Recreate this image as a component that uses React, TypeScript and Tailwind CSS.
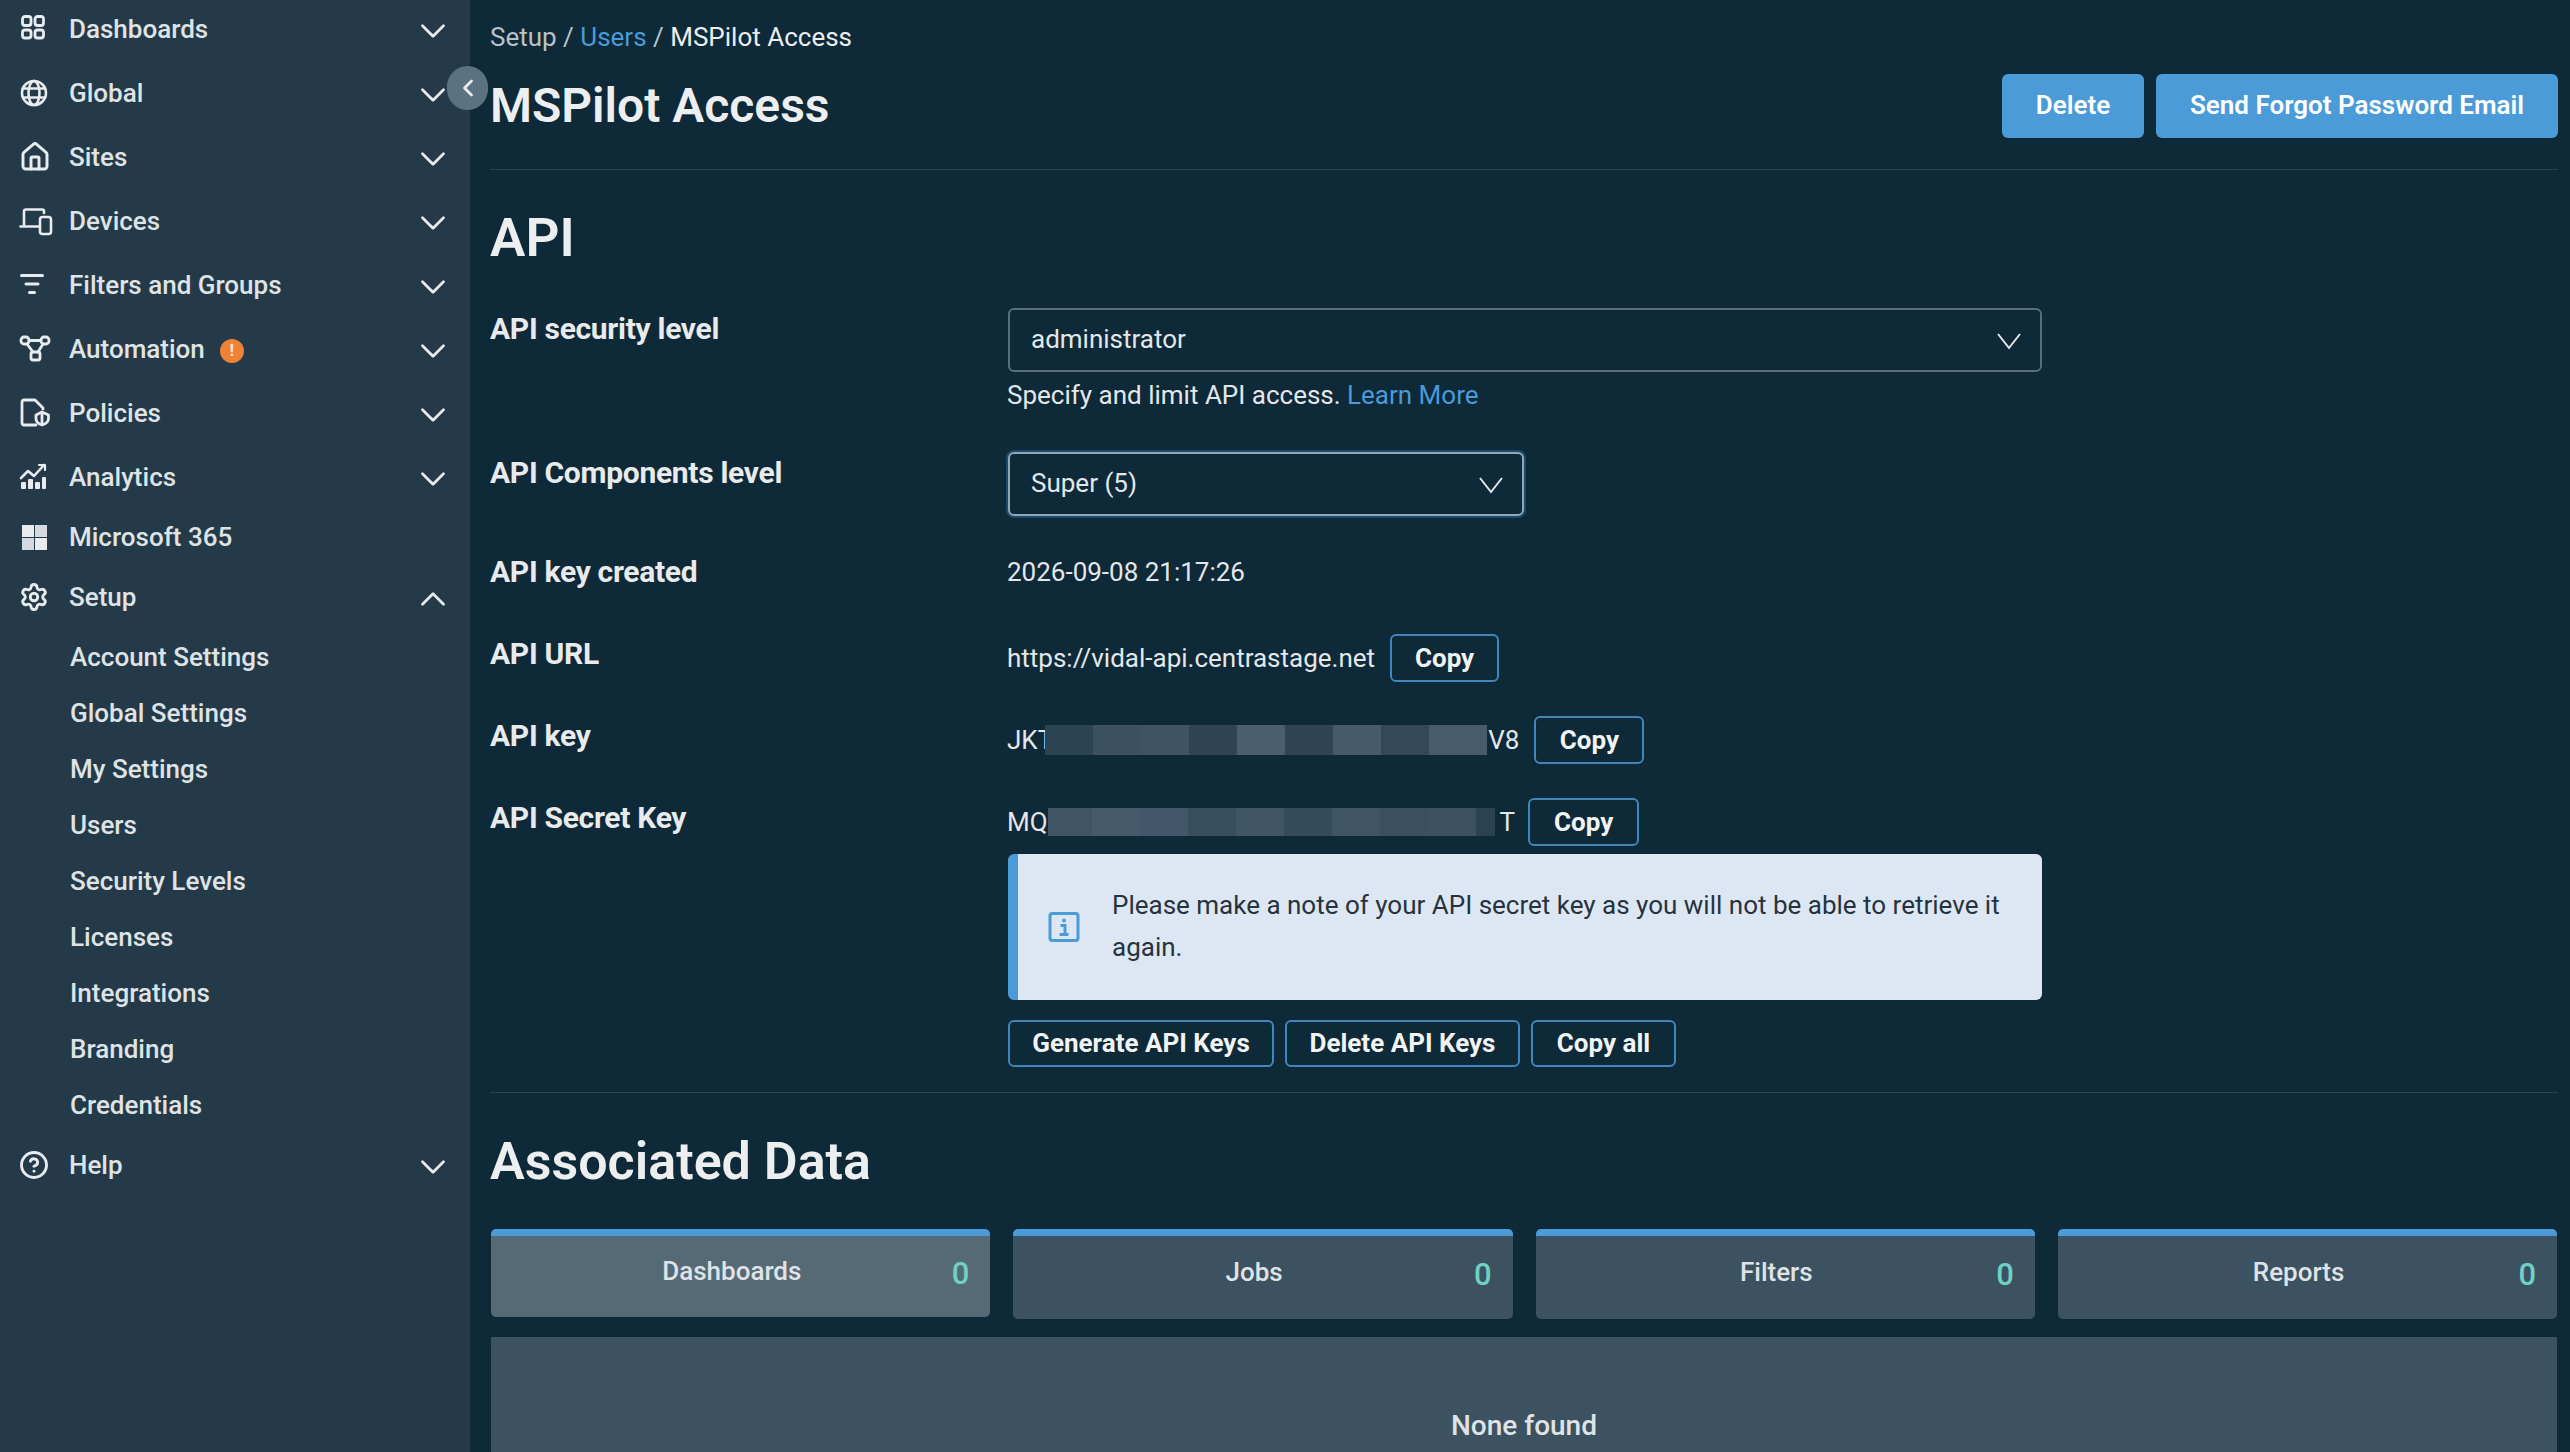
import React from "react";
import { ChevronDown, ChevronLeft, ChevronUp, CircleHelp, House, Settings } from "lucide-react";

const ic = { fill: "none", stroke: "currentColor", strokeWidth: 2, strokeLinecap: "round" as const, strokeLinejoin: "round" as const };

const DashIcon = () => (
  <svg width="30" height="30" viewBox="0 0 30 30" {...ic} strokeWidth={2.8}>
    <rect x="3.500" y="2.500" width="8.500" height="9" rx="2.500" />
    <rect x="16" y="2.500" width="8.500" height="9" rx="2.500" />
    <rect x="3.500" y="16" width="8.500" height="8" rx="2.500" />
    <rect x="16" y="16" width="8.500" height="8" rx="2.500" />
  </svg>
);
const GlobeIcon = () => (
  <svg width="30" height="30" viewBox="0 0 30 30" {...ic} strokeWidth={2.6}>
    <circle cx="15" cy="15" r="12" />
    <ellipse cx="15" cy="15" rx="5.500" ry="12" />
    <path d="M4 10.500h22M4 19.500h22" />
  </svg>
);
const DevicesIcon = () => (
  <svg width="36" height="30" viewBox="0 0 36 30" {...ic} strokeWidth={2.6}>
    <path d="M5 19V5.500A2 2 0 0 1 7 3.500h16a2 2 0 0 1 2 2V7" />
    <path d="M1.500 20.500H20" />
    <rect x="21" y="11" width="11" height="17" rx="2.500" />
  </svg>
);
const FilterIcon = () => (
  <svg width="30" height="30" viewBox="0 0 30 30" {...ic} strokeWidth={3}>
    <path d="M2.500 5.500h21" />
    <path d="M7 14h12" />
    <path d="M10.500 22.500h5" />
  </svg>
);
const AutomationIcon = () => (
  <svg width="32" height="30" viewBox="0 0 32 30" {...ic} strokeWidth={2.8}>
    <rect x="2" y="3" width="8" height="7" rx="3" />
    <rect x="22" y="3" width="8" height="7" rx="3" />
    <rect x="12" y="18" width="9" height="8" rx="2" />
    <path d="M10 6.500h12" />
    <path d="M8 10l6 8" />
    <path d="M24 10l-5 8" />
  </svg>
);
const PolicyIcon = () => (
  <svg width="32" height="30" viewBox="0 0 32 30" {...ic} strokeWidth={2.8}>
    <path d="M17 27H5a2 2 0 0 1-2-2V4a2 2 0 0 1 2-2h11l8 8v1" />
    <path d="M23 14l6.500 3v3.500c0 3.500-3 5.500-6.500 6.500-3.500-1-6-3-6-6.500V17z" />
    <path d="M23 15v11" />
  </svg>
);
const AnalyticsIcon = () => (
  <svg width="30" height="30" viewBox="0 0 30 30" fill="currentColor">
    <rect x="2" y="20" width="5" height="7" rx="1" />
    <rect x="9" y="17" width="5" height="10" rx="1" />
    <rect x="16" y="20" width="5" height="7" rx="1" />
    <rect x="23" y="15" width="4" height="12" rx="1" />
    <path d="M2 16l7-7 6 5 10-11" {...ic} strokeWidth={2.6} />
    <path d="M20 3h6v5" {...ic} strokeWidth={2.2} />
  </svg>
);
const MsIcon = () => (
  <svg width="30" height="30" viewBox="0 0 30 30" fill="currentColor">
    <rect x="3" y="3" width="12" height="12" />
    <rect x="16" y="3" width="12" height="12" opacity="0.9" />
    <rect x="3" y="16" width="12" height="12" opacity="0.9" />
    <rect x="16" y="16" width="12" height="12" />
  </svg>
);
const AlertIcon = () => (
  <svg width="32" height="32" viewBox="0 0 32 32" fill="none" stroke="#4a9bd8">
    <rect x="2" y="2.500" width="28" height="27" rx="2.500" strokeWidth="3" />
    <circle cx="16" cy="9.500" r="2" fill="#4a9bd8" stroke="none" />
    <path d="M12.500 14.500H17V23M11.500 23.500h9" strokeWidth="3" />
  </svg>
);
const SelectArrow = () => (
  <svg className="ml-auto mt-[3px]" width="26" height="18" viewBox="0 0 26 18" fill="none" stroke="#e4e7ea" strokeWidth="2">
    <path d="M2 2l11 14L24 2" />
  </svg>
);

type Item = { label: string; icon: React.ReactNode; h: string; up?: boolean; none?: boolean; badge?: boolean };
const top: Item[] = [
  { label: "Dashboards", icon: <DashIcon />, h: "h-[64px]" },
  { label: "Global", icon: <GlobeIcon />, h: "h-[64px]" },
  { label: "Sites", icon: <House size={32} strokeWidth={2.2} />, h: "h-[64px]" },
  { label: "Devices", icon: <DevicesIcon />, h: "h-[64px]" },
  { label: "Filters and Groups", icon: <FilterIcon />, h: "h-[64px]" },
  { label: "Automation", icon: <AutomationIcon />, h: "h-[64px]", badge: true },
  { label: "Policies", icon: <PolicyIcon />, h: "h-[64px]" },
  { label: "Analytics", icon: <AnalyticsIcon />, h: "h-[64px]" },
  { label: "Microsoft 365", icon: <MsIcon />, h: "h-[56px]", none: true },
  { label: "Setup", icon: <Settings size={30} strokeWidth={2.3} />, h: "h-[64px]", up: true },
];
const subs = ["Account Settings", "Global Settings", "My Settings", "Users", "Security Levels", "Licenses", "Integrations", "Branding", "Credentials"];

function NavRow({ item }: { item: Item }) {
  return (
    <div className={`flex items-center pl-[19px] pr-[16px] ${item.h}`}>
      <span className="flex w-[50px] shrink-0 items-center text-[#e8ecef]">{item.icon}</span>
      <span className="text-[26px] font-medium leading-none text-[#dfe3e6]">{item.label}</span>
      {item.badge && (
        <span className="ml-[15px] mt-[3px] flex h-[24px] w-[24px] items-center justify-center rounded-full bg-[#ee8237] text-[17px] font-bold leading-none text-[#fde6d4]">!</span>
      )}
      {!item.none && (
        <span className="ml-auto mt-[4px] text-[#e6eaed]">
          {item.up ? <ChevronUp size={42} strokeWidth={1.6} /> : <ChevronDown size={42} strokeWidth={1.6} />}
        </span>
      )}
    </div>
  );
}

function Sidebar() {
  return (
    <aside className="relative h-full w-[470px] shrink-0 bg-[#243a49]">
      <div className="-mt-[3px] flex flex-col">
        {top.map((t) => (
          <NavRow key={t.label} item={t} />
        ))}
        <div className="flex flex-col">
          {subs.map((s) => (
            <div key={s} className="flex h-[56px] items-center pl-[70px] text-[26px] font-medium leading-none text-[#dfe3e6]">
              {s}
            </div>
          ))}
        </div>
        <NavRow item={{ label: "Help", icon: <CircleHelp size={30} strokeWidth={2.3} />, h: "h-[64px]" }} />
      </div>
      <span className="absolute left-[447px] top-[66px] flex h-[44px] w-[41px] items-center justify-center rounded-full bg-[#5b7280] text-[#e6eaed]">
        <ChevronLeft size={28} strokeWidth={2.4} />
      </span>
    </aside>
  );
}

function Label({ children, lh }: { children: React.ReactNode; lh: string }) {
  return <div className={`w-[518px] shrink-0 text-[30px] font-bold tracking-[-0.3px] text-[#e8eaec] ${lh}`}>{children}</div>;
}

function OutlineBtn({ children, cls }: { children: React.ReactNode; cls: string }) {
  return (
    <button className={`flex items-center justify-center rounded-[6px] border-2 border-[#3f87bd] pb-[1px] text-[26px] font-bold leading-none text-[#f1f3f5] ${cls}`}>
      {children}
    </button>
  );
}

function Select({ text, cls }: { text: string; cls: string }) {
  return (
    <div className={`flex h-[64px] items-center rounded-[6px] pb-[2px] pl-[21px] pr-[18px] text-[26px] text-[#e4e7ea] ${cls}`}>
      <span>{text}</span>
      <SelectArrow />
    </div>
  );
}

const blur1 = ["bg-[#2c4352] w-[48px]", "bg-[#3b5060] w-[48px]", "bg-[#3f5362] w-[48px]", "bg-[#2f4555] w-[48px]", "bg-[#4a5e6e] w-[48px]", "bg-[#2f4555] w-[48px]", "bg-[#465a69] w-[48px]", "bg-[#334958] w-[48px]", "bg-[#475b6a] w-[58px]"];
const blur2 = ["bg-[#3f5563] w-[44px]", "bg-[#465a69] w-[48px]", "bg-[#42576a] w-[48px]", "bg-[#374e5d] w-[48px]", "bg-[#415665] w-[48px]", "bg-[#344b5a] w-[48px]", "bg-[#3f5563] w-[48px]", "bg-[#3a505f] w-[48px]", "bg-[#3d5261] w-[48px]", "bg-[#2a4252] w-[19px]"];

function Blur({ items, h }: { items: string[]; h: string }) {
  return (
    <span className={`flex ${h}`}>
      {items.map((c) => (
        <span key={c} className={c} />
      ))}
    </span>
  );
}

function Card({ label, active, h }: { label: string; active?: boolean; h: string }) {
  return (
    <div className={`flex items-center rounded-[5px] border-t-[7px] border-[#4a9bd8] pl-[21px] pr-[21px] ${h} ${active ? "bg-[#566a76]" : "bg-[#3d5260]"}`}>
      <span className="-mt-[12px] flex-1 text-center text-[26px] font-medium leading-none text-[#dfe3e6]">{label}</span>
      <span className="-mt-[6px] text-[31px] font-medium leading-none text-[#6fd0c4]">0</span>
    </div>
  );
}

export default function App() {
  return (
    <div className="flex h-[1452px] w-full overflow-hidden bg-[#0e2937] font-['Roboto',sans-serif]">
      <Sidebar />
      <main className="min-w-0 flex-1 pl-[20px] pr-[12px]">
        <div className="flex h-[74px] items-center text-[26px] text-[#b9c2c9]">
          <span>Setup /&nbsp;</span>
          <span className="text-[#4a9bd8]">Users</span>
          <span>&nbsp;/&nbsp;</span>
          <span className="text-[#eceef0]">MSPilot Access</span>
        </div>
        <div className="flex h-[64px] items-center justify-between">
          <h1 className="text-[48px] font-semibold leading-none text-[#eceef0]">MSPilot Access</h1>
          <div className="flex gap-[12px]">
            <button className="h-[64px] w-[142px] rounded-[6px] bg-[#4a9bd8] pb-[2px] text-[26px] font-semibold text-white">Delete</button>
            <button className="h-[64px] w-[402px] rounded-[6px] bg-[#4a9bd8] pb-[2px] text-[26px] font-semibold text-white">Send Forgot Password Email</button>
          </div>
        </div>
        <div className="mt-[31px] border-t border-[#2a4554]" />
        <h2 className="flex h-[134px] items-center pt-[3px] text-[53px] font-semibold leading-none text-[#eceef0]">API</h2>

        <div className="mt-[4px] flex">
          <Label lh="leading-[42px]">API security level</Label>
          <div className="flex w-[1034px] flex-col">
            <Select text="administrator" cls="border-2 border-[#5a6d7a]" />
            <div className="-ml-px mt-[3px] h-[40px] text-[26px] leading-[40px] text-[#e4e7ea]">
              Specify and limit API access. <span className="text-[#4a9bd8]">Learn More</span>
            </div>
          </div>
        </div>

        <div className="mt-[37px] flex">
          <Label lh="leading-[42px]">API Components level</Label>
          <Select text="Super (5)" cls="w-[516px] border-2 border-[#8fa7b8] shadow-[0_0_0_2px_#1d4a6b]" />
        </div>

        <div className="mt-[34px] flex items-center">
          <Label lh="leading-[44px]">API key created</Label>
          <span className="-ml-px text-[26px] text-[#e4e7ea]">2026-09-08 21:17:26</span>
        </div>

        <div className="mt-[40px] flex">
          <Label lh="leading-[40px]">API URL</Label>
          <div className="-ml-px flex items-center">
            <span className="text-[26px] text-[#e4e7ea]">https://vidal-api.centrastage.net</span>
            <OutlineBtn cls="ml-[15px] h-[48px] w-[109px]">Copy</OutlineBtn>
          </div>
        </div>

        <div className="mt-[34px] flex">
          <Label lh="leading-[40px]">API key</Label>
          <div className="-ml-px flex items-center">
            <span className="text-[26px] text-[#e4e7ea]">JKT</span>
            <Blur items={blur1} h="relative -ml-[8px] h-[30px]" />
            <span className="ml-px text-[26px] text-[#e4e7ea]">V8</span>
            <OutlineBtn cls="ml-[15px] h-[48px] w-[110px]">Copy</OutlineBtn>
          </div>
        </div>

        <div className="mt-[34px] flex">
          <Label lh="leading-[40px]">API Secret Key</Label>
          <div className="-ml-px flex items-center">
            <span className="text-[26px] text-[#e4e7ea]">MQ</span>
            <Blur items={blur2} h="h-[28px]" />
            <span className="ml-[5px] text-[26px] text-[#e4e7ea]">T</span>
            <OutlineBtn cls="ml-[13px] h-[48px] w-[111px]">Copy</OutlineBtn>
          </div>
        </div>

        <div className="ml-[518px] mt-[8px] flex h-[146px] w-[1034px] items-center rounded-[6px] border-l-[10px] border-[#4a9bd8] bg-[#dde7f3]">
          <span className="ml-[30px] shrink-0">
            <AlertIcon />
          </span>
          <p className="ml-[32px] -mt-[2px] w-[900px] text-[26px] leading-[42px] text-[#26333d]">
            Please make a note of your API secret key as you will not be able to retrieve it again.
          </p>
        </div>

        <div className="ml-[518px] mt-[20px] flex gap-[11px]">
          <OutlineBtn cls="h-[47px] w-[266px]">Generate API Keys</OutlineBtn>
          <OutlineBtn cls="h-[47px] w-[235px]">Delete API Keys</OutlineBtn>
          <OutlineBtn cls="h-[47px] w-[145px]">Copy all</OutlineBtn>
        </div>

        <div className="mt-[25px] border-t border-[#2a4554]" />
        <h2 className="flex h-[134px] items-center pt-[3px] text-[52px] font-semibold leading-none text-[#eceef0]">Associated Data</h2>

        <div className="mt-[2px] grid grid-cols-4 gap-[23px] px-px">
          <Card label="Dashboards" active h="h-[88px]" />
          <Card label="Jobs" h="h-[90px]" />
          <Card label="Filters" h="h-[90px]" />
          <Card label="Reports" h="h-[90px]" />
        </div>

        <div className="mx-px mt-[18px] flex h-[178px] items-center justify-center bg-[#3d5260] text-[28px] font-medium text-[#dfe3e6]">
          None found
        </div>
      </main>
    </div>
  );
}
